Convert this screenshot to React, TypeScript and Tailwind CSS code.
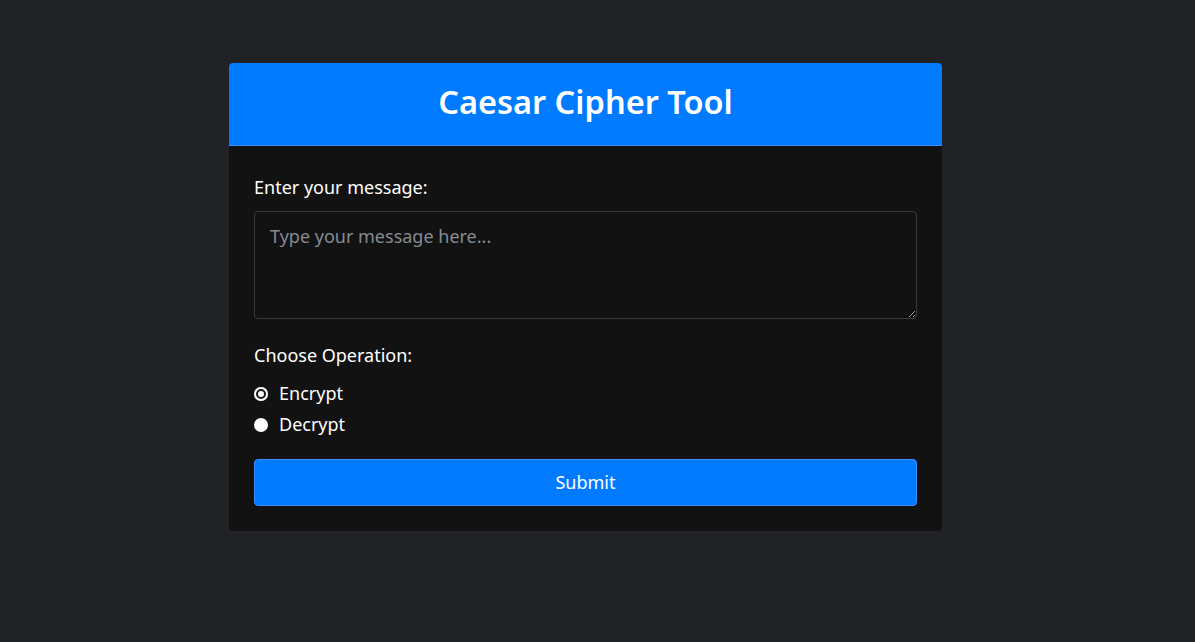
import React, { useState } from "react";

export default function App() {
  const [message, setMessage] = useState("");
  const [mode, setMode] = useState<"encrypt" | "decrypt">("encrypt");

  return (
    <div
      className="min-h-screen bg-[#212225] pt-[63px] text-white"
      style={{ fontFamily: '"Noto Sans", "Open Sans", sans-serif' }}
    >
      <div className="ml-[229px] w-[713px] overflow-hidden rounded-[4px] bg-[#121212]">
        {/* header */}
        <div className="flex h-[83px] items-center justify-center border-b border-[#3a8eff] bg-[#007bff] pb-[4px]">
          <h1 className="text-[32.5px] font-semibold">Caesar Cipher Tool</h1>
        </div>

        <form className="px-[25px] pb-[25px] pt-[28px]" onSubmit={(e) => e.preventDefault()}>
          <label className="block text-[18px] leading-[27px]">Enter your message:</label>
          <textarea
            className="mt-[10px] block h-[108px] w-full resize-y rounded-[4px] border border-[#3a3a3a] bg-[#121212] px-[15px] py-[11px] text-[18px] text-white outline-none placeholder:text-[#858b93]"
            placeholder="Type your message here..."
            value={message}
            onChange={(e) => setMessage(e.target.value)}
          />

          <label className="mt-[23px] block text-[18px] leading-[27px]">Choose Operation:</label>
          <div className="mt-[11px] flex flex-col gap-[4px]">
            {(["encrypt", "decrypt"] as const).map((m) => (
              <label key={m} className="flex items-center gap-[11px] text-[18px] leading-[27px]">
                <input
                  type="radio"
                  name="mode"
                  checked={mode === m}
                  onChange={() => setMode(m)}
                  className="h-[14px] w-[14px] appearance-none rounded-full bg-white checked:shadow-[inset_0_0_0_2px_#fff,inset_0_0_0_4px_#1a1a1a]"
                />
                {m === "encrypt" ? "Encrypt" : "Decrypt"}
              </label>
            ))}
          </div>

          <button
            type="submit"
            className="mt-[21px] h-[47px] w-full rounded-[4px] border border-[#3a8eff] bg-[#007bff] text-[18px] text-white"
          >
            Submit
          </button>
        </form>
      </div>
    </div>
  );
}
